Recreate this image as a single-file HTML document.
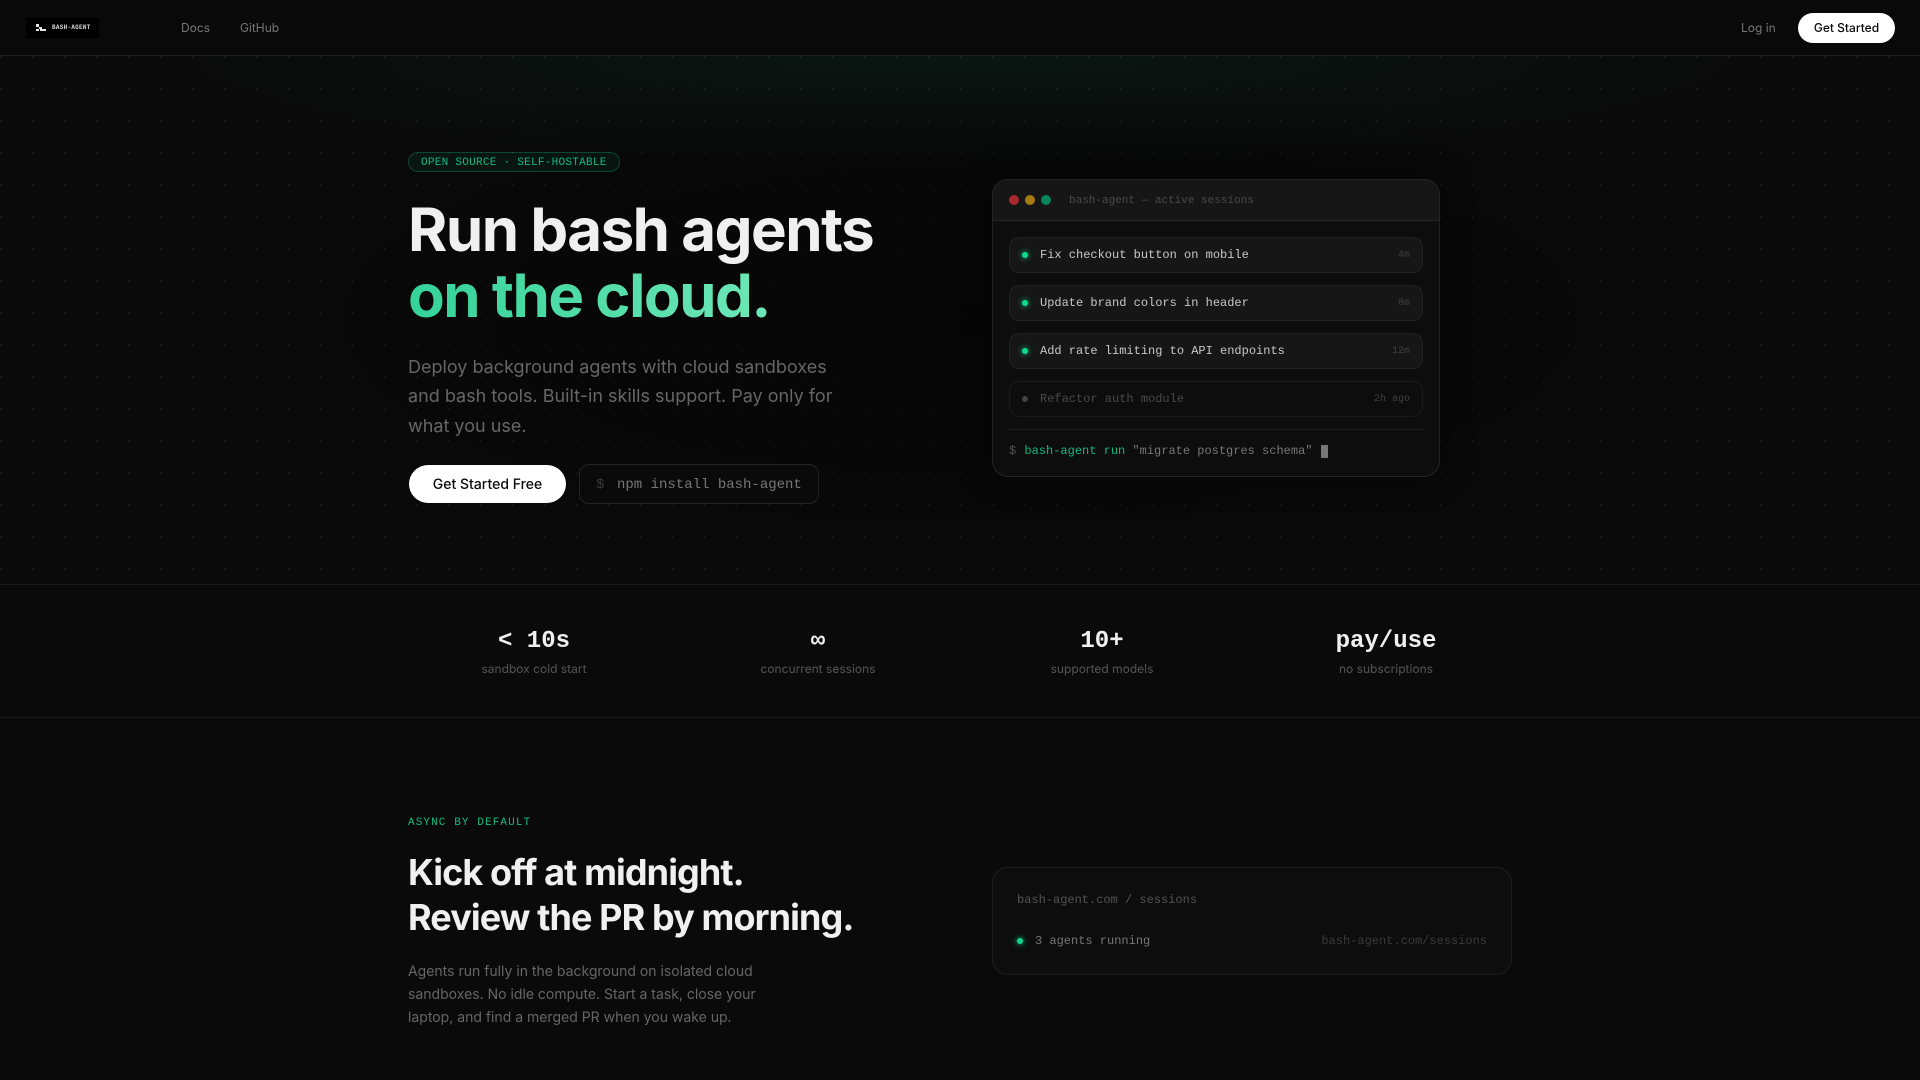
<!DOCTYPE html>
<html lang="en"><head><meta charset="utf-8"><title>bash-agent</title>
<style>
*{box-sizing:border-box;margin:0;padding:0}
html,body{width:1920px;height:1080px;overflow:hidden;background:#0a0a0a}
body{position:relative;font-family:"Inter","Liberation Sans",sans-serif;color:#f0f0f0}
.a{position:absolute;white-space:nowrap}
.m{font-family:"Liberation Mono",monospace}
.hero{position:absolute;left:0;top:56px;width:1920px;height:528px;
background:radial-gradient(ellipse 800px 110px at 50% 0,rgba(16,185,129,.07),transparent 100%),radial-gradient(circle at 1px 1px,#1b1b1b 1px,transparent 1px);background-size:auto,32px 32px;background-repeat:no-repeat,repeat}
.shade{position:absolute;left:160px;top:56px;width:1600px;height:528px;background:radial-gradient(closest-side,rgba(3,3,3,.55),rgba(3,3,3,.4) 55%,transparent 100%)}
.line{position:absolute;left:0;width:1920px;height:1px;background:#1a1a1a}
.win{position:absolute;left:992px;top:179px;width:448px;height:298px;background:#0d0d0d;border:1px solid #242424;border-radius:16px;box-shadow:0 0 30px rgba(0,0,0,.5);overflow:hidden}
.bar{position:absolute;left:0;top:0;width:446px;height:41px;background:#161616;border-bottom:1px solid #242424}
.dot{position:absolute;width:10px;height:10px;border-radius:50%;top:15px}
.row{position:absolute;left:1009px;width:414px;height:36px;background:#161616;border:1px solid #222;border-radius:10px}
.row i{position:absolute;left:12px;top:14px;width:6px;height:6px;border-radius:50%;background:#10d98f;box-shadow:0 0 6px #10d98f}
.row b{position:absolute;left:30px;top:1px;font:400 12px/33px "Liberation Mono",monospace;color:#c8c8c8;white-space:nowrap}
.row s{position:absolute;right:12px;top:0;font:400 10px/35px "Liberation Mono",monospace;color:#404040;text-decoration:none}
.st{position:absolute;top:628px;width:252px;text-align:center}
.st b{display:block;font:700 24px/28px "Liberation Mono",monospace;color:#f0f0f0}
.st span{display:block;margin-top:5px;font-size:12px;line-height:16px;color:#555}
</style></head><body>
<div class="a" style="left:0;top:0;width:1920px;height:55px;background:#090909"></div>
<div class="line" style="top:55px;background:#1c1c1c"></div>
<div class="a" style="left:26px;top:18px;width:73px;height:20px;background:#000"></div>
<svg class="a" style="left:36px;top:24px" width="11" height="8" viewBox="0 0 11 8"><path fill="#e6e6e6" d="M0 0h3v3H0zM3 3h3v2H3zM0 5h3v2H0zM4 5h6v2H4z"/></svg>
<div class="a m" style="left:52px;top:23px;font-size:6px;line-height:9px;font-weight:700;letter-spacing:.26px;color:#d8d8d8">BASH-AGENT</div>
<div class="a" style="left:181px;top:19px;font-size:12px;line-height:18px;color:#777">Docs</div>
<div class="a" style="left:240px;top:19px;font-size:12px;line-height:18px;color:#777">GitHub</div>
<div class="a" style="left:1741px;top:19px;font-size:12px;line-height:18px;color:#777">Log in</div>
<div class="a" style="left:1798px;top:13px;width:97px;height:30px;border-radius:15px;background:#fff;color:#0a0a0a;font-size:12px;line-height:30px;font-weight:500;text-align:center">Get Started</div>

<div class="hero"></div><div class="shade"></div>
<div class="a m" style="left:408px;top:152px;width:212px;height:20px;border:1px solid rgba(16,185,129,.3);background:rgba(16,185,129,.07);border-radius:10px;padding-left:12px;font-size:11px;line-height:20px;letter-spacing:.275px;color:#10b981">OPEN SOURCE · SELF-HOSTABLE</div>
<div class="a" style="left:408px;top:197px;font-size:60px;line-height:66px;font-weight:700;letter-spacing:-1.5px;color:#f0f0f0">Run bash agents</div>
<div class="a" style="left:408px;top:263px;font-size:60px;line-height:66px;font-weight:700;letter-spacing:-1.5px;color:transparent;background:linear-gradient(90deg,#34d399,#6ee7b7);-webkit-background-clip:text;background-clip:text">on the cloud.</div>
<div class="a" style="left:408px;top:353px;font-size:18px;line-height:29.25px;color:#666">Deploy background agents with cloud sandboxes<br>and bash tools. Built-in skills support. Pay only for<br>what you use.</div>
<div class="a" style="left:409px;top:465px;width:157px;height:38px;border-radius:19px;background:#fff;color:#0a0a0a;font-size:14px;line-height:39px;font-weight:500;text-align:center">Get Started Free</div>
<div class="a m" style="left:579px;top:464px;width:240px;height:40px;border:1px solid #222;border-radius:10px;background:#0a0a0a;font-size:14px;line-height:40px;padding-left:16px;color:#777"><span style="color:#3a3a3a;margin-right:12.6px">$</span>npm install bash-agent</div>

<div class="win"><div class="bar">
<div class="dot" style="left:16px;background:#a8272d"></div>
<div class="dot" style="left:32px;background:#a67a10"></div>
<div class="dot" style="left:48px;background:#08855a"></div>
<div class="a m" style="left:76px;top:13px;font-size:11px;line-height:16px;color:#4a4a4a">bash-agent — active sessions</div>
</div></div>
<div class="row" style="top:237px"><i></i><b>Fix checkout button on mobile</b><s>4m</s></div>
<div class="row" style="top:285px"><i></i><b>Update brand colors in header</b><s>8m</s></div>
<div class="row" style="top:333px"><i></i><b>Add rate limiting to API endpoints</b><s>12m</s></div>
<div class="row" style="top:381px;background:transparent;border-color:#1a1a1a"><i style="background:#444;box-shadow:none"></i><b style="color:#4a4a4a">Refactor auth module</b><s>2h ago</s></div>
<div class="a" style="left:1009px;top:429px;width:414px;height:1px;background:#1e1e1e"></div>
<div class="a m" style="left:1009px;top:443px;font-size:12px;line-height:16px;color:#777"><span style="color:#555;margin-right:1px">$ </span><span style="color:#10b981">bash-agent run</span> "migrate postgres schema"</div>
<div class="a" style="left:1321px;top:445px;width:7px;height:13px;background:#777"></div>

<div class="line" style="top:584px"></div>
<div class="st" style="left:408px"><b>&lt; 10s</b><span>sandbox cold start</span></div>
<div class="st" style="left:692px"><b>∞</b><span>concurrent sessions</span></div>
<div class="st" style="left:976px"><b>10+</b><span>supported models</span></div>
<div class="st" style="left:1260px"><b>pay/use</b><span>no subscriptions</span></div>
<div class="line" style="top:717px"></div>

<div class="a m" style="left:408px;top:815px;font-size:11px;line-height:16px;letter-spacing:1.1px;color:#10b981">ASYNC BY DEFAULT</div>
<div class="a" style="left:408px;top:850px;font-size:36px;line-height:45px;font-weight:700;letter-spacing:-.9px;color:#f0f0f0">Kick off at midnight.<br>Review the PR by morning.</div>
<div class="a" style="left:408px;top:960px;font-size:14px;line-height:23px;color:#666">Agents run fully in the background on isolated cloud<br>sandboxes. No idle compute. Start a task, close your<br>laptop, and find a merged PR when you wake up.</div>

<div class="a" style="left:992px;top:867px;width:520px;height:108px;background:#0d0d0d;border:1px solid #1e1e1e;border-radius:16px"></div>
<div class="a m" style="left:1017px;top:893px;font-size:12px;line-height:14px;color:#555">bash-agent.com / sessions</div>
<div class="a" style="left:1017px;top:938px;width:6px;height:6px;border-radius:50%;background:#10d98f;box-shadow:0 0 6px #10d98f"></div>
<div class="a m" style="left:1035px;top:934px;font-size:12px;line-height:14px;color:#777">3 agents running</div>
<div class="a m" style="right:433px;top:934px;font-size:12px;line-height:14px;color:#3a3a3a">bash-agent.com/sessions</div>
</body></html>
